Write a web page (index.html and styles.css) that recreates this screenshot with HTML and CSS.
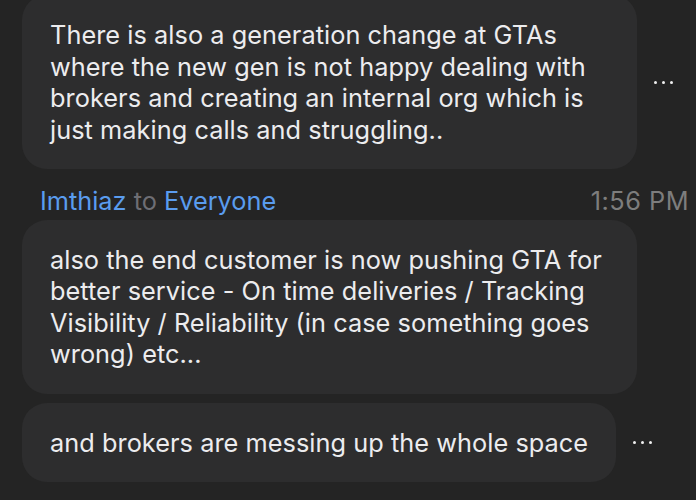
FILE: index.html
```html
<!DOCTYPE html>
<html>
<head>
<meta charset="utf-8">
<link rel="stylesheet" href="styles.css">
</head>
<body>
<div class="chat">
  <div class="row first">
    <div class="bubble">There is also a generation change at GTAs where the new gen is not happy dealing with brokers and creating an internal org which is just making calls and struggling..</div>
    <div class="more"><span></span><span></span><span></span></div>
  </div>
  <div class="header">
    <div class="from"><span class="name">Imthiaz</span> <span class="to">to</span> <span class="name">Everyone</span></div>
    <div class="time">1:56 PM</div>
  </div>
  <div class="row">
    <div class="bubble">also the end customer is now pushing GTA for better service - On time deliveries / Tracking Visibility / Reliability (in case something goes wrong) etc...</div>
  </div>
  <div class="row gap">
    <div class="bubble">and brokers are messing up the whole space</div>
    <div class="more"><span></span><span></span><span></span></div>
  </div>
</div>
</body>
</html>
```
FILE: styles.css
```css
html, body {
  margin: 0;
  padding: 0;
  background: #242424;
}
body {
  font-family: Inter, "Noto Sans", sans-serif;
  color: #ececee;
  overflow: hidden;
  height: 500px;
}
.chat {
  display: flex;
  flex-direction: column;
  padding: 0 7px 0 22px;
}
.row {
  display: flex;
  align-items: center;
  gap: 17px;
}
.row.first {
  margin-top: -5px;
}
.row.gap {
  margin-top: 9px;
}
.bubble {
  box-sizing: border-box;
  max-width: 615px;
  background: #2d2d2e;
  border-radius: 25px;
  padding: 24px 28px 24px;
  font-size: 25.3px;
  line-height: 31.5px;
  letter-spacing: 0.05px;
}
.more {
  display: flex;
  gap: 5px;
}
.more span {
  width: 3px;
  height: 3px;
  border-radius: 50%;
  background: #f0f0f0;
}
.header {
  display: flex;
  justify-content: space-between;
  align-items: baseline;
  margin: 16px 0 3px 18px;
  font-size: 25.3px;
  line-height: 31.5px;
}
.name {
  color: #5a9cef;
}
.to {
  color: #6e6e74;
}
.time {
  color: #7d7d7d;
  letter-spacing: 0.5px;
}
```
